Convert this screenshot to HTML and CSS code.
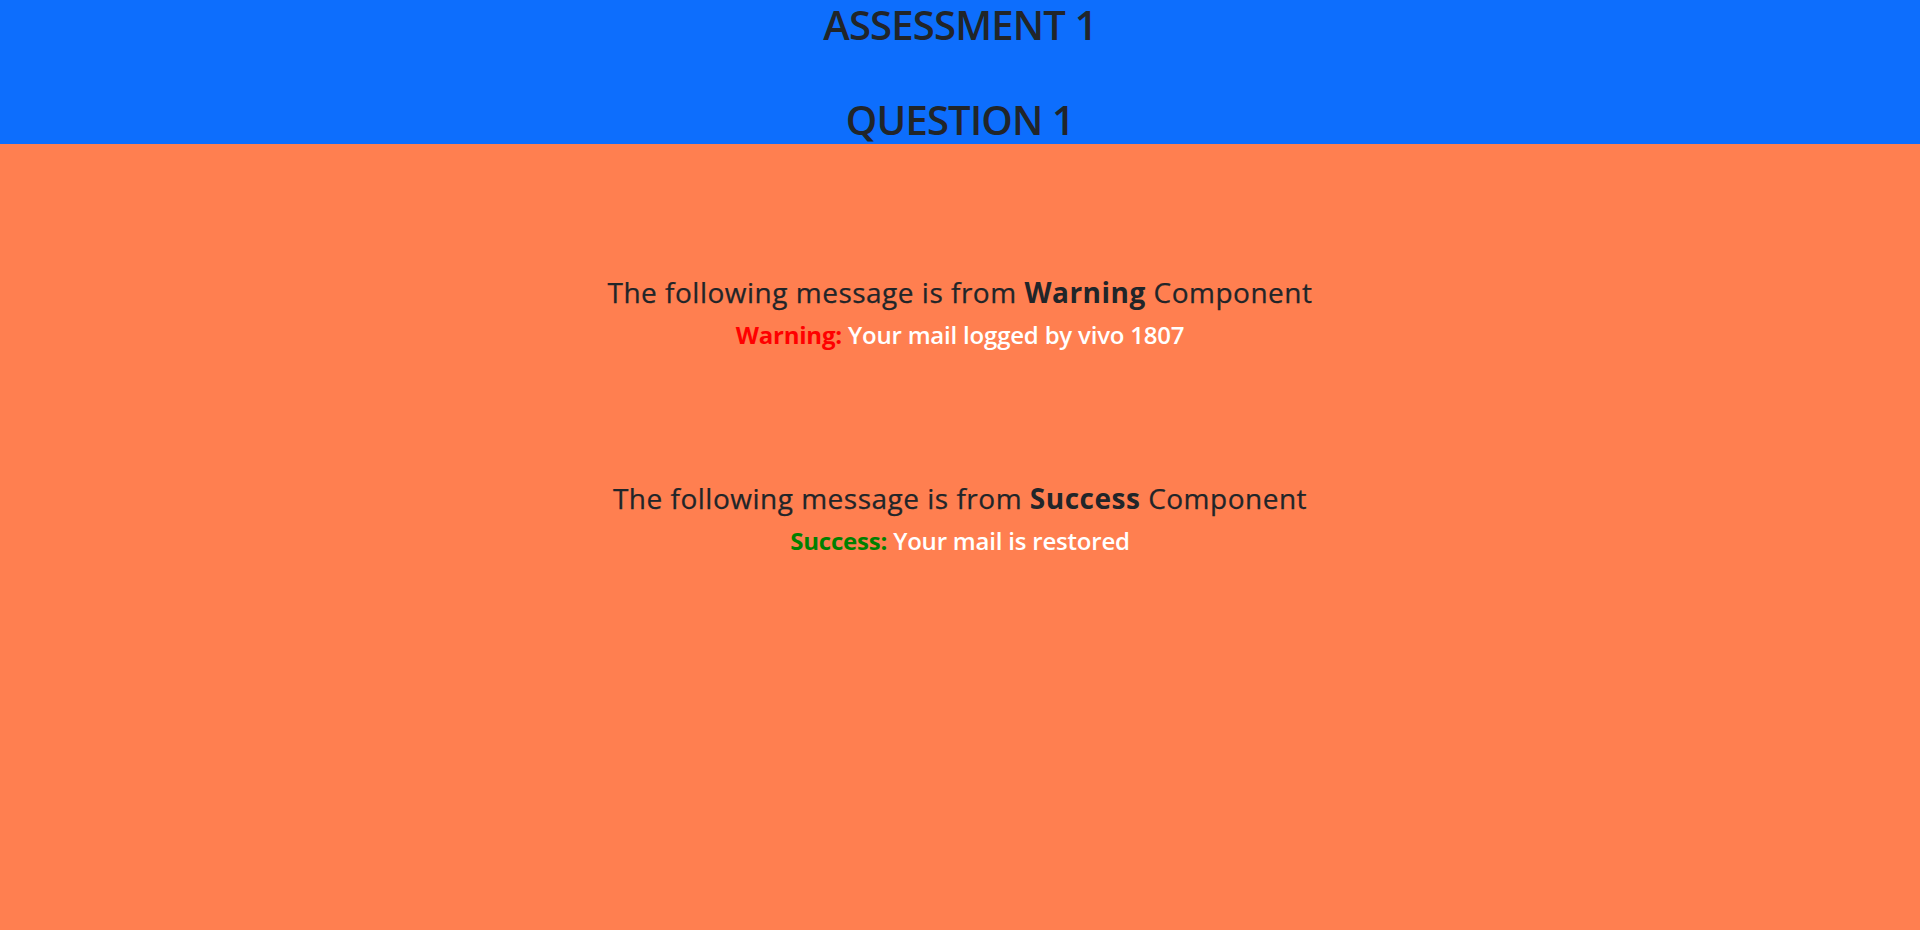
FILE: index.html
```html
<!DOCTYPE html>
<html lang="en">
<head>
<meta charset="utf-8">
<title>Assessment 1</title>
<link rel="stylesheet" href="styles.css">
</head>
<body>
<header class="banner">
  <h1 class="banner-title banner-title-top">ASSESSMENT 1</h1>
  <h1 class="banner-title">QUESTION 1</h1>
</header>
<main class="content">
  <section class="message-block">
    <h3 class="message-heading">The following message is from <b>Warning</b> Component</h3>
    <h4 class="message-text"><span class="label-warning">Warning:</span> Your mail logged by vivo 1807</h4>
  </section>
  <section class="message-block message-block-second">
    <h3 class="message-heading">The following message is from <b>Success</b> Component</h3>
    <h4 class="message-text"><span class="label-success">Success:</span> Your mail is restored</h4>
  </section>
</main>
</body>
</html>
```
FILE: styles.css
```css
html, body {
  margin: 0;
  padding: 0;
}
body {
  background: #ff7f50;
  min-height: 100vh;
  font-family: "Open Sans", "Noto Sans", "Liberation Sans", sans-serif;
  color: #212529;
}
.banner {
  background: #0d6efd;
  text-align: center;
  display: flex;
  flex-direction: column;
  padding-top: 1px;
}
.banner-title {
  margin: 0;
  font-size: 40px;
  font-weight: 600;
  line-height: 48px;
  letter-spacing: -0.8px;
  color: #212529;
}
.banner-title-top {
  margin-bottom: 47px;
}
.content {
  padding-top: 131px;
  text-align: center;
  display: flex;
  flex-direction: column;
}
.message-block {
  display: flex;
  flex-direction: column;
}
.message-block-second {
  margin-top: 132px;
}
.message-heading {
  margin: 0;
  font-size: 28px;
  font-weight: 400;
  line-height: 34px;
  letter-spacing: 0.5px;
  -webkit-text-stroke: 0.25px #212529;
}
.message-heading b {
  font-weight: 700;
  -webkit-text-stroke: 0;
}
.message-text {
  margin: 11px 0 0;
  font-size: 24px;
  font-weight: 600;
  line-height: 29px;
  letter-spacing: -0.2px;
  color: #ffffff;
}
.label-warning {
  color: #ff0000;
  font-weight: 700;
}
.label-success {
  color: #008000;
  font-weight: 700;
}
```
